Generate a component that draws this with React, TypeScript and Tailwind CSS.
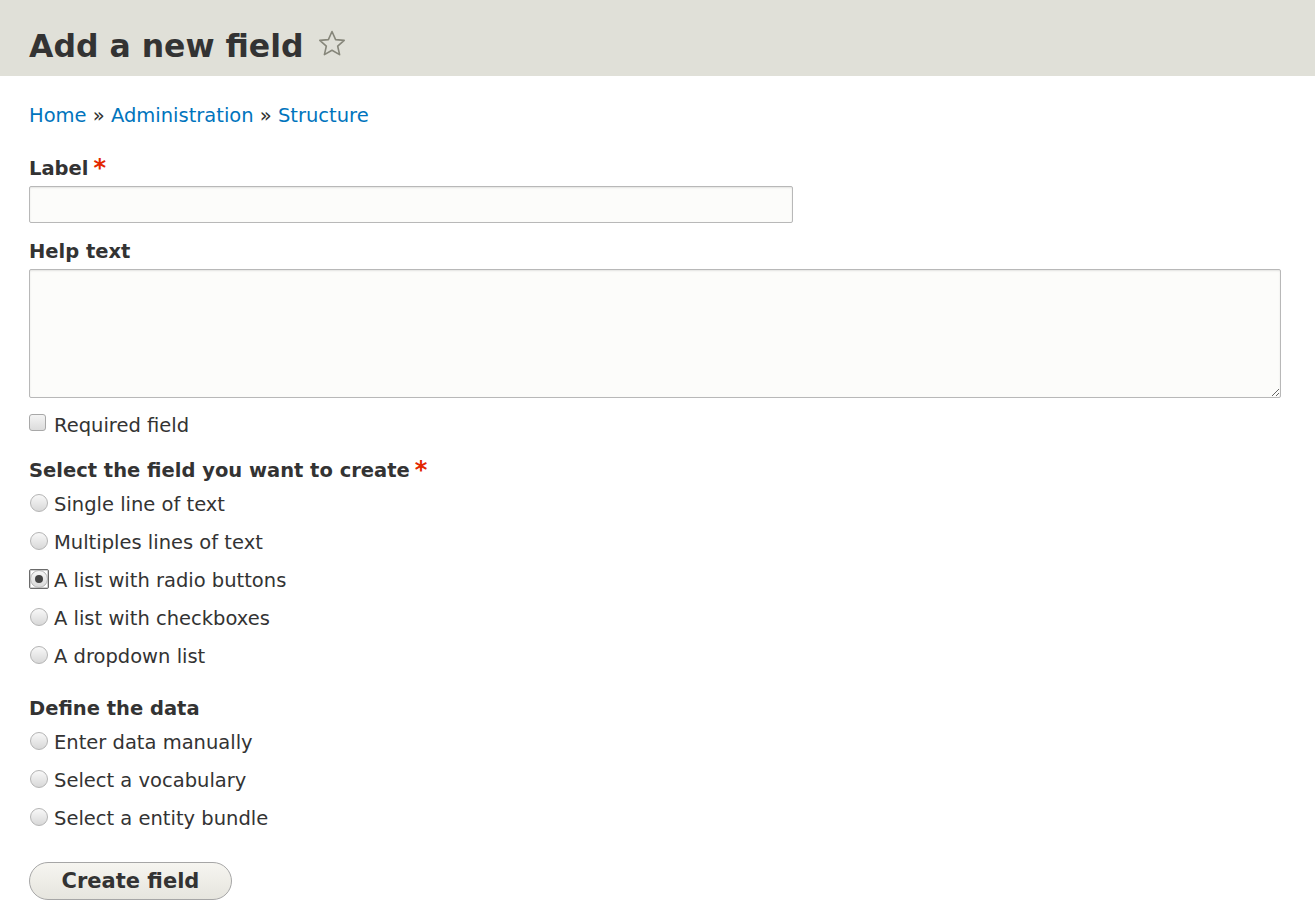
import React, { useState } from "react";

const fieldTypes = [
  "Single line of text",
  "Multiples lines of text",
  "A list with radio buttons",
  "A list with checkboxes",
  "A dropdown list",
];

const dataSources = [
  "Enter data manually",
  "Select a vocabulary",
  "Select a entity bundle",
];

const Star: React.FC = () => (
  <svg width="30" height="28" viewBox="0 0 30 28" className="ml-[13px] mt-[1px]">
    <path
      d="M15 2.5 L18.6 10.6 L27.2 11.4 L20.7 17.2 L22.6 25.6 L15 21.2 L7.4 25.6 L9.3 17.2 L2.8 11.4 L11.4 10.6 Z"
      fill="none"
      stroke="#86867a"
      strokeWidth="1.6"
      strokeLinejoin="round"
    />
  </svg>
);

const Required: React.FC = () => (
  <span className="ml-[5px] text-[#e32700] text-[24px] leading-none relative top-[2px] font-bold">
    *
  </span>
);

const Radio: React.FC<{ checked: boolean; focused: boolean }> = ({ checked, focused }) => (
  <span
    className={`mt-[3px] flex h-[20px] w-[20px] shrink-0 items-center justify-center ${
      focused ? "border border-[#6b6b6b] rounded-[2px] shadow-[inset_0_0_0_1px_#d0d0d0]" : ""
    }`}
  >
    <span className="flex h-[18px] w-[18px] items-center justify-center rounded-full border border-[#b4b4b4] bg-[linear-gradient(#f8f8f8,#d8d8d8)]">
      {checked && <span className="h-[8px] w-[8px] rounded-full bg-[#444]" />}
    </span>
  </span>
);

const App: React.FC = () => {
  const [fieldType, setFieldType] = useState(2);
  const [dataSource, setDataSource] = useState<number | null>(null);
  const [required, setRequired] = useState(false);

  return (
    <div
      className="min-h-screen bg-white text-[#333] text-[19.5px]"
      style={{ fontFamily: '"DejaVu Sans", Verdana, sans-serif' }}
    >
      {/* Header */}
      <header className="h-[76px] bg-[#e0e0d8] px-[29px] pt-[28px]">
        <div className="flex items-start">
          <h1 className="text-[31.5px] font-bold leading-[36px] m-0">Add a new field</h1>
          <Star />
        </div>
      </header>

      <main className="pl-[29px] pr-[34px] leading-[29px]">
        {/* Breadcrumb */}
        <nav className="mt-[25px]">
          <a href="#" className="text-[#0074bd]">Home</a>
          {" » "}
          <a href="#" className="text-[#0074bd]">Administration</a>
          {" » "}
          <a href="#" className="text-[#0074bd]">Structure</a>
        </nav>

        <div className="mt-[24px]">
          <label className="flex font-bold">
            Label
            <Required />
          </label>
          <input
            type="text"
            className="mt-[3px] block h-[37px] w-[764px] rounded-[2px] border border-[#b8b8b8] bg-[#fcfcfa] px-2 shadow-[inset_0_1px_2px_rgba(0,0,0,0.1)] outline-none"
          />
        </div>

        <div className="mt-[14px]">
          <label className="block font-bold">Help text</label>
          <textarea className="mt-[3px] block h-[129px] w-full rounded-[2px] border border-[#b8b8b8] bg-[#fcfcfa] px-2 shadow-[inset_0_1px_2px_rgba(0,0,0,0.1)] outline-none" />
        </div>

        <label className="mt-[13px] flex cursor-pointer" onClick={() => setRequired(!required)}>
          <span className="mt-[3px] flex h-[17px] w-[17px] shrink-0 items-center justify-center rounded-[3px] border border-[#a8a8a8] bg-[linear-gradient(#f4f4f4,#dcdcdc)] text-[12px] leading-none">
            {required ? "✓" : ""}
          </span>
          <span className="ml-[8px]">Required field</span>
        </label>

        <fieldset className="mt-[16px]">
          <div className="flex font-bold">
            Select the field you want to create
            <Required />
          </div>
          <div className="mt-[5px] flex flex-col gap-[9px]">
            {fieldTypes.map((t, i) => (
              <label key={t} className="flex cursor-pointer" onClick={() => setFieldType(i)}>
                <Radio checked={fieldType === i} focused={fieldType === i} />
                <span className="ml-[5px]">{t}</span>
              </label>
            ))}
          </div>
        </fieldset>

        <fieldset className="mt-[23px]">
          <div className="font-bold">Define the data</div>
          <div className="mt-[5px] flex flex-col gap-[9px]">
            {dataSources.map((t, i) => (
              <label key={t} className="flex cursor-pointer" onClick={() => setDataSource(i)}>
                <Radio checked={dataSource === i} focused={false} />
                <span className="ml-[5px]">{t}</span>
              </label>
            ))}
          </div>
        </fieldset>

        <button
          type="button"
          className="mt-[29px] h-[38px] w-[203px] rounded-full border border-[#a6a6a6] bg-[linear-gradient(#f6f5f0,#e6e5de)] text-[21px] font-bold text-[#333] leading-none"
        >
          Create field
        </button>
      </main>
    </div>
  );
};

export default App;
